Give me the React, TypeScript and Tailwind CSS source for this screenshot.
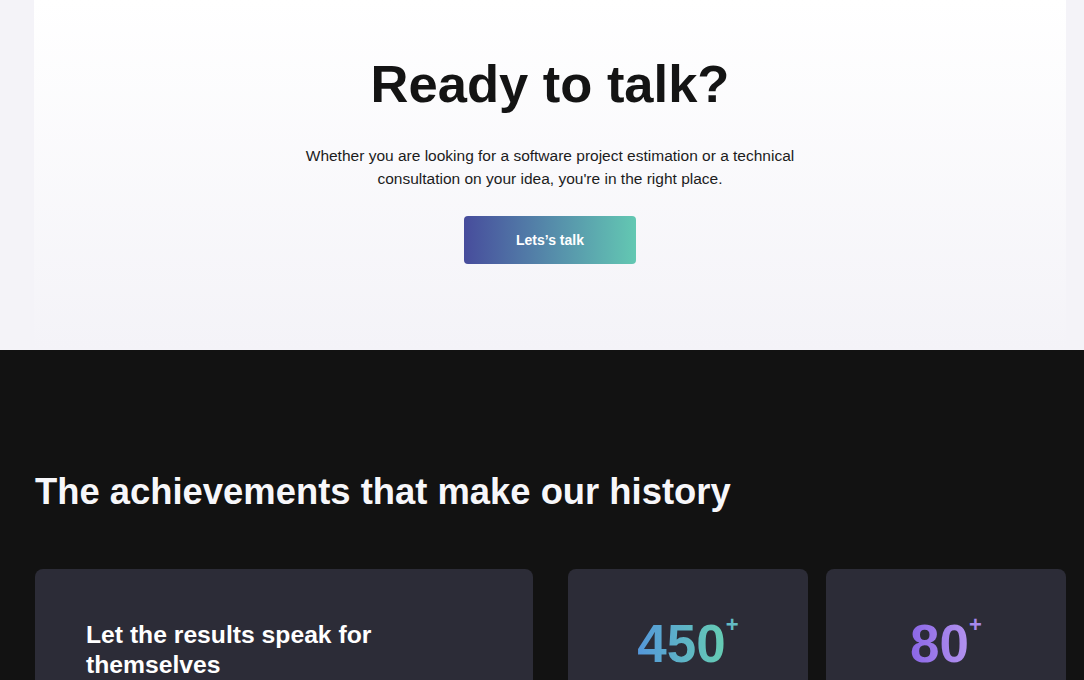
const font = { fontFamily: '"Liberation Sans", Arial, sans-serif' };

function Stat({ value, from, to, plus }: { value: string; from: string; to: string; plus: string }) {
  return (
    <div className="bg-[#2c2c37] rounded-lg h-[220px] flex justify-center pt-[48px]">
      <div className="flex items-start h-fit">
        <span
          className="text-[53px] leading-none font-bold bg-clip-text text-transparent"
          style={{ backgroundImage: `linear-gradient(to right, ${from}, ${to})` }}
        >
          {value}
        </span>
        <span className="-mt-[3px] text-[22px] leading-none font-bold" style={{ color: plus }}>
          +
        </span>
      </div>
    </div>
  );
}

export default function App() {
  return (
    <div style={font} className="w-full h-[680px] overflow-hidden bg-[#121212]">
      {/* Call to action */}
      <section className="bg-[#f4f3f8] pl-[34px] pr-[18px]">
        <div className="bg-linear-to-b from-white to-[#f4f3f8] h-[350px] flex flex-col items-center pt-[53px]">
          <h1 className="text-[52.5px] leading-[62px] font-bold text-[#141414]">Ready to talk?</h1>
          <p className="mt-[29px] max-w-[500px] text-center text-[15.5px] leading-[23px] text-[#1c1c1c]">
            Whether you are looking for a software project estimation or a technical consultation on your idea,
            you're in the right place.
          </p>
          <button className="mt-[26px] w-[172px] h-[48px] rounded bg-linear-to-r from-[#474c9c] to-[#63c8b2] text-white text-[14px] font-bold">
            Lets’s talk
          </button>
        </div>
      </section>

      {/* Achievements */}
      <section className="pl-[35px] pr-[18px] pt-[120px] pb-16">
        <h2 className="text-[36.4px] leading-[44px] font-bold text-[#f7f7fa]">The achievements that make our history</h2>
        <div className="mt-[55px] grid grid-cols-2 gap-[35px]">
          <div className="bg-[#2c2c37] rounded-lg h-[220px] px-[51px] pt-[51px]">
            <h3 className="text-[24.7px] leading-[30px] font-bold text-white max-w-[320px]">
              Let the results speak for themselves
            </h3>
          </div>
          <div className="grid grid-cols-2 gap-[18px]">
            <Stat value="450" from="#5497db" to="#66cdb2" plus="#63bcc4" />
            <Stat value="80" from="#8a66e6" to="#b393ee" plus="#a688ec" />
          </div>
        </div>
      </section>
    </div>
  );
}
